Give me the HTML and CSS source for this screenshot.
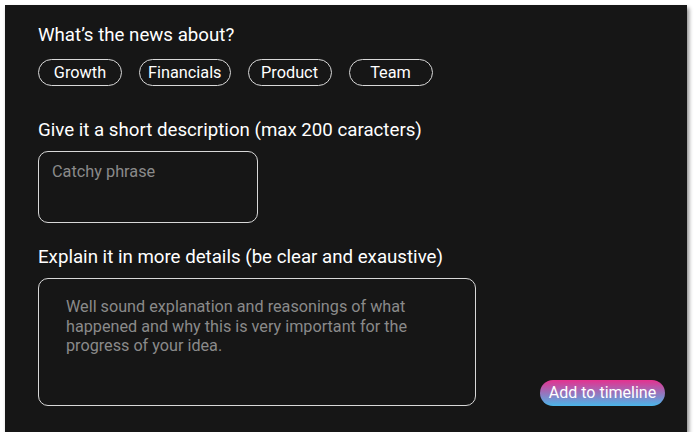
FILE: index.html
```html
<!DOCTYPE html>
<html lang="en">
<head>
<meta charset="utf-8">
<title>News form</title>
<link rel="stylesheet" href="styles.css">
</head>
<body>
<main class="panel">
  <h2 class="label label-first">What’s the news about?</h2>
  <div class="chips">
    <button class="chip">Growth</button>
    <button class="chip">Financials</button>
    <button class="chip">Product</button>
    <button class="chip">Team</button>
  </div>
  <h2 class="label">Give it a short description (max 200 caracters)</h2>
  <textarea class="field short" placeholder="Catchy phrase"></textarea>
  <h2 class="label label-third">Explain it in more details (be clear and exaustive)</h2>
  <div class="row">
    <textarea class="field long" placeholder="Well sound explanation and reasonings of what happened and why this is very important for the progress of your idea."></textarea>
    <button class="cta">Add to timeline</button>
  </div>
</main>
</body>
</html>
```
FILE: styles.css
```css
* { box-sizing: border-box; }
html, body { margin: 0; padding: 0; background: #ffffff; }
body { font-family: Roboto, "Noto Sans", sans-serif; }

.panel {
  margin: 5px 0 0 5px;
  width: 682px;
  height: 427px;
  background: #161616;
  box-shadow: 2px 3px 4px rgba(0, 0, 0, 0.45);
  padding: 19px 0 0 33px;
  display: flex;
  flex-direction: column;
  align-items: flex-start;
}

.label {
  margin: 33px 0 0 0;
  font-size: 18.7px;
  line-height: 22px;
  font-weight: 400;
  color: #ffffff;
}
.label-first { margin-top: 0; }
.label-third { margin-top: 23px; }

.chips {
  display: flex;
  gap: 17px;
  margin-top: 13px;
}
.chip {
  min-width: 84px;
  height: 27px;
  padding: 1px 8px 0;
  border: 1px solid #d8d8d8;
  border-radius: 14px;
  background: transparent;
  color: #ffffff;
  font-family: inherit;
  font-size: 16.3px;
  line-height: 24px;
}

.field {
  display: block;
  margin: 10px 0 0 0;
  border: 1px solid #d8d8d8;
  border-radius: 10px;
  background: transparent;
  color: #ffffff;
  font-family: inherit;
  resize: none;
  outline: none;
}
.field::placeholder { color: #8a8a8a; opacity: 1; }
.short {
  width: 220px;
  height: 72px;
  padding: 10px 12px 10px 13px;
  font-size: 16.3px;
  line-height: 19px;
}
.long {
  width: 438px;
  height: 128px;
  padding: 18px 50px 17px 27px;
  font-size: 16.2px;
  line-height: 19.5px;
}

.row {
  display: flex;
  align-items: flex-end;
}
.cta {
  margin-left: 64px;
  width: 125px;
  height: 26px;
  padding: 0;
  border: none;
  border-radius: 13px;
  background: linear-gradient(180deg, #e5318f 0%, #4ab6ea 100%);
  color: #ffffff;
  font-family: inherit;
  font-size: 16px;
  line-height: 26px;
}
```
